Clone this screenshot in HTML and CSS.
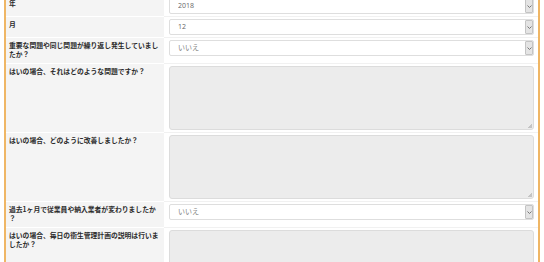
FILE: index.html
```html
<!DOCTYPE html>
<html lang="ja">
  <head>
    <meta charset="UTF-8" />
    <meta name="viewport" content="width=device-width, initial-scale=1.0" />
    <title>衛生管理 月次チェック</title>
    <link rel="stylesheet" href="styles.css">
  </head>

  <body>
    <div class="panel">
      <table class="form-table">
        <colgroup>
          <col class="col-label" />
          <col />
        </colgroup>
        <tr>
          <th>年</th>
          <td>
            <div class="select-box">
              <select><option>2018</option></select>
              <span class="select-arrow"><svg width="5" height="3" viewBox="0 0 5 3"><polyline points="0.5,0.5 2.5,2.5 4.5,0.5" fill="none" stroke="#777" stroke-width="1" /></svg></span>
            </div>
          </td>
        </tr>
        <tr>
          <th>月</th>
          <td>
            <div class="select-box">
              <select><option>12</option></select>
              <span class="select-arrow"><svg width="5" height="3" viewBox="0 0 5 3"><polyline points="0.5,0.5 2.5,2.5 4.5,0.5" fill="none" stroke="#777" stroke-width="1" /></svg></span>
            </div>
          </td>
        </tr>
        <tr>
          <th>重要な問題や同じ問題が繰り返し発生していましたか？</th>
          <td>
            <div class="select-box">
              <select class="muted"><option>いいえ</option></select>
              <span class="select-arrow"><svg width="5" height="3" viewBox="0 0 5 3"><polyline points="0.5,0.5 2.5,2.5 4.5,0.5" fill="none" stroke="#777" stroke-width="1" /></svg></span>
            </div>
          </td>
        </tr>
        <tr>
          <th>はいの場合、それはどのような問題ですか？</th>
          <td><textarea disabled></textarea></td>
        </tr>
        <tr>
          <th>はいの場合、どのように改善しましたか？</th>
          <td><textarea disabled></textarea></td>
        </tr>
        <tr>
          <th>過去1ヶ月で従業員や納入業者が変わりましたか？</th>
          <td>
            <div class="select-box">
              <select class="muted"><option>いいえ</option></select>
              <span class="select-arrow"><svg width="5" height="3" viewBox="0 0 5 3"><polyline points="0.5,0.5 2.5,2.5 4.5,0.5" fill="none" stroke="#777" stroke-width="1" /></svg></span>
            </div>
          </td>
        </tr>
        <tr>
          <th>はいの場合、毎日の衛生管理計画の説明は行いましたか？</th>
          <td><textarea disabled></textarea></td>
        </tr>
      </table>
    </div>
  </body>
</html>
```

FILE: styles.css
```css
body {
  margin: 0;
  font-family: "Open Sans", "Noto Sans CJK JP", sans-serif;
  background: #fff;
  color: #333;
}

/* Panel */
.panel {
  margin: -5px 4px 0;
  border-left: 2px solid #efb665;
  border-right: 2px solid #efb665;
}

/* Form table */
.form-table {
  width: 100%;
  border-collapse: collapse;
  table-layout: fixed;
}

.col-label {
  width: 158px;
}

.form-table th,
.form-table td {
  vertical-align: top;
  border-top: 1px solid #fff;
}

.form-table th {
  background: #f4f4f4;
  padding: 3px 3px 4px;
  text-align: left;
  font-family: "Noto Sans CJK JP", sans-serif;
  font-size: 6.8px;
  line-height: 9px;
  font-weight: 700;
  color: #2b2b2b;
  line-break: anywhere;
}

.form-table td {
  padding: 2px 4px 2px 5px;
  border-top-color: #f1f1f1;
  font-size: 7px;
  line-height: 0;
}

/* Select */
.select-box {
  position: relative;
  height: 16px;
}

.select-box select {
  display: block;
  box-sizing: border-box;
  appearance: none;
  width: 100%;
  height: 16px;
  margin: 0;
  padding: 0 8px;
  border: 1px solid #dedede;
  border-radius: 2px;
  background: #fff;
  font-family: "Open Sans", "Noto Sans CJK JP", sans-serif;
  font-size: 7px;
  line-height: 14px;
  color: #666;
}

.select-box select.muted {
  color: #808080;
}

.select-arrow {
  position: absolute;
  top: 1px;
  right: 1px;
  bottom: 1px;
  width: 6px;
  background: #e4e4e4;
  border: 1px solid #c4c4c4;
  border-radius: 1px;
  display: flex;
  align-items: center;
  justify-content: center;
}

/* Textarea */
textarea {
  display: block;
  box-sizing: border-box;
  width: 100%;
  height: 64px;
  margin: 0;
  border: 1px solid #dcdcdc;
  border-radius: 3px;
  background: #ececec;
  resize: vertical;
}

textarea::-webkit-resizer {
  background: linear-gradient(135deg, transparent 50%, #c4c4c4 50%) no-repeat right 1px bottom 1px / 4px 4px;
}
```
